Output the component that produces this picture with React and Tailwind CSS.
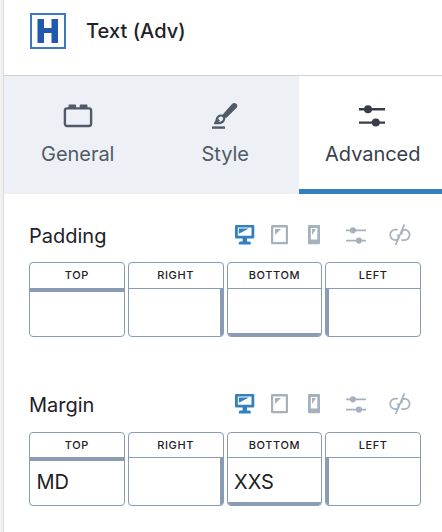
import React, { useState } from 'react';
import clsx from 'clsx';

const BlockIcon = () => (
  <svg width="30" height="24" viewBox="0 0 30 24" fill="none">
    <rect x="1.9" y="4.4" width="26.2" height="17.6" rx="2.2" stroke="currentColor" strokeWidth="2.4" />
    <path d="M5.5 5V1.4Q5.5 .5 6.4 .5H12.2Q13.1 .5 13.1 1.4V5ZM16.7 5V1.4Q16.7 .5 17.6 .5H23.6Q24.5 .5 24.5 1.4V5Z" fill="currentColor" />
  </svg>
);

const BrushIcon = () => (
  <svg width="26" height="28" viewBox="0 0 26 28" fill="none">
    <path d="M11.4 13.4 20.6 3Q22 1.4 23.6 2.6Q24.8 3.9 23.6 5.3L14 14.8Z" fill="currentColor" stroke="currentColor" strokeWidth="2.2" strokeLinejoin="round" />
    <path d="M3 21.2C4.6 19.6 4.4 17.8 5.4 15.8C6.4 13.8 8.6 13 10.4 13.8C12.2 14.6 12.8 16.6 11.6 18.6C10 21.2 6.8 21.4 3 21.2Z" stroke="currentColor" strokeWidth="2.2" strokeLinejoin="round" />
    <path d="M3.4 21.2 7.2 17.8" stroke="currentColor" strokeWidth="2.2" />
    <path d="M0 25.6H13" stroke="currentColor" strokeWidth="2.4" />
  </svg>
);

const SlidersIcon = ({ className }) => (
  <svg className={className} viewBox="0 0 26 22" fill="none">
    <path d="M0 4.3H26M0 17.6H26" stroke="currentColor" strokeWidth="2.4" />
    <circle cx="9" cy="4.3" r="4" fill="currentColor" />
    <circle cx="16.8" cy="17.6" r="4" fill="currentColor" />
  </svg>
);

const DesktopIcon = () => (
  <svg width="20" height="20" viewBox="0 0 20 20" className="text-[#3280bd]">
    <path fillRule="evenodd" d="M1.3 0H18Q19.3 0 19.3 1.3V12.2Q19.3 13.5 18 13.5H12V16.5H14.5Q15.8 16.5 15.8 18V19.4H3.8V18Q3.8 16.5 5.2 16.5H7.6V13.5H1.3Q0 13.5 0 12.2V1.3Q0 0 1.3 0ZM2.8 2.6V10.8H16.5V2.6Z" fill="currentColor" />
    <path d="M3.8 3.5H14L3.8 8.8Z" fill="currentColor" />
  </svg>
);

const TabletIcon = () => (
  <svg width="17" height="20" viewBox="0 0 17 20" className="text-[#a6b1be]">
    <path fillRule="evenodd" d="M1 0H16Q17 0 17 1V18.3Q17 19.3 16 19.3H1Q0 19.3 0 18.3V1Q0 0 1 0ZM2.2 2.4V16.9H14.8V2.4Z" fill="currentColor" />
    <path d="M4 4H10L4 10Z" fill="currentColor" />
  </svg>
);

const PhoneIcon = () => (
  <svg width="12" height="20" viewBox="0 0 12 20" className="text-[#a6b1be]">
    <path fillRule="evenodd" d="M1 0H11Q12 0 12 1V18.3Q12 19.3 11 19.3H1Q0 19.3 0 18.3V1Q0 0 1 0ZM2.8 3V14.5H9.3V3Z" fill="currentColor" />
    <path d="M4 4H8L4 10Z" fill="currentColor" />
  </svg>
);

const UnlinkIcon = () => (
  <svg width="22" height="22" viewBox="0 0 22 22" fill="none" className="text-[#a6b1be]" stroke="currentColor" strokeWidth="1.7">
    <path d="M8.8 5.6H6.4A5 5 0 0 0 6.4 16.1H7.2Q9.4 15.9 9.6 12.8M7.8 11.3H10.2" />
    <path d="M12.4 16.1H15.4A5 5 0 0 0 15.4 5.6Q12.8 5.8 12.8 8.4V10.6" />
    <path d="M15.4 .4 6.6 21" />
  </svg>
);

const tabs = [
  { name: 'General', icon: <BlockIcon /> },
  { name: 'Style', icon: <BrushIcon /> },
  { name: 'Advanced', icon: <SlidersIcon className="mr-0.5 h-[22px] w-[26px]" /> },
];

// the thick edge marks which side the input controls
const sides = [
  { name: 'Top', edge: 'border-t-4' },
  { name: 'Right', edge: 'border-t border-r-[3px]' },
  { name: 'Bottom', edge: 'border-t border-b-[3px]' },
  { name: 'Left', edge: 'border-t border-l-[3px]' },
];

const Dimensions = ({ label, values = {}, className, labelClass, iconsClass, headClass }) => (
  <section className={clsx('pl-[25px]', className)}>
    <div className="flex h-[30px] items-center">
      <h3 className={clsx('w-[206px] text-[20px] leading-[30px]', labelClass)}>{label}</h3>
      <div className={clsx('flex items-center', iconsClass)}>
        <DesktopIcon />
        <span className="ml-4"><TabletIcon /></span>
        <span className="ml-5"><PhoneIcon /></span>
        <SlidersIcon className="ml-[26px] h-[17px] w-5 text-[#a6b1be]" />
        <span className="ml-[23px]"><UnlinkIcon /></span>
      </div>
    </div>
    <div className="mt-3 grid w-[392px] grid-cols-4 gap-[3px]">
      {sides.map(({ name, edge }) => (
        <label key={name} className="flex flex-col overflow-hidden rounded-[4px] border border-[#8a9bb4]">
          <span className={clsx('text-center text-[11px] font-medium uppercase tracking-[0.6px]', headClass)}>
            {name}
          </span>
          <span className={clsx('block h-12 border-[#8a9bb4]', edge)}>
            <input
              defaultValue={values[name]}
              className={clsx(
                'block h-11 w-full bg-transparent pl-[6.5px] text-[20px] outline-none',
                name === 'Top' ? '-mt-px' : 'mt-0.5'
              )}
            />
          </span>
        </label>
      ))}
    </div>
  </section>
);

const App = () => {
  const [active, setActive] = useState('Advanced');

  return (
    <div className="flex h-[532px] w-[442px] overflow-hidden bg-white font-['Inter',sans-serif] text-[#1e2126]">
      <div className="w-1 shrink-0 border-r border-[#dcdcdc] bg-[#f0f0f0]" />
      <div className="w-[438px] shrink-0">
        <header className="flex h-[76px] items-center border-b border-[#ccd3df] pb-[13px] pl-[26px]">
          <div className="flex h-9 w-9 items-center justify-center border-2 border-[#3c78c0]">
            <svg width="22" height="24" viewBox="0 0 22 24" fill="#2259ad">
              <path d="M.5 0H7V9H14.5V0H21V24H14.5V14H7V24H.5Z" />
            </svg>
          </div>
          <h2 className="ml-5 text-[20px] font-medium tracking-[0.05px]">Text (Adv)</h2>
        </header>

        <nav className="flex h-[118px]">
          {tabs.map(({ name, icon }) => (
            <button
              key={name}
              onClick={() => setActive(name)}
              className={clsx(
                'flex w-[147.5px] shrink-0 flex-col items-center border-b-[5px] pt-[25px] text-[20px] tracking-[-0.05px]',
                active === name
                  ? 'border-[#3280bd] bg-white text-[#383e49]'
                  : 'border-[#edf0f5] bg-[#edf0f5] text-[#505a68]'
              )}
            >
              <span className="flex h-[30px] items-center">{icon}</span>
              <span className="mt-2 leading-[30px]">{name}</span>
            </button>
          ))}
        </nav>

        <Dimensions label="Padding" className="mt-[26px]" labelClass="pt-px" headClass="leading-[25px]" />
        <Dimensions
          label="Margin"
          values={{ Top: 'MD', Bottom: 'XXS' }}
          className="mt-[53px]"
          iconsClass="pb-0.5"
          headClass="leading-6"
        />
      </div>
    </div>
  );
};

export default App;
